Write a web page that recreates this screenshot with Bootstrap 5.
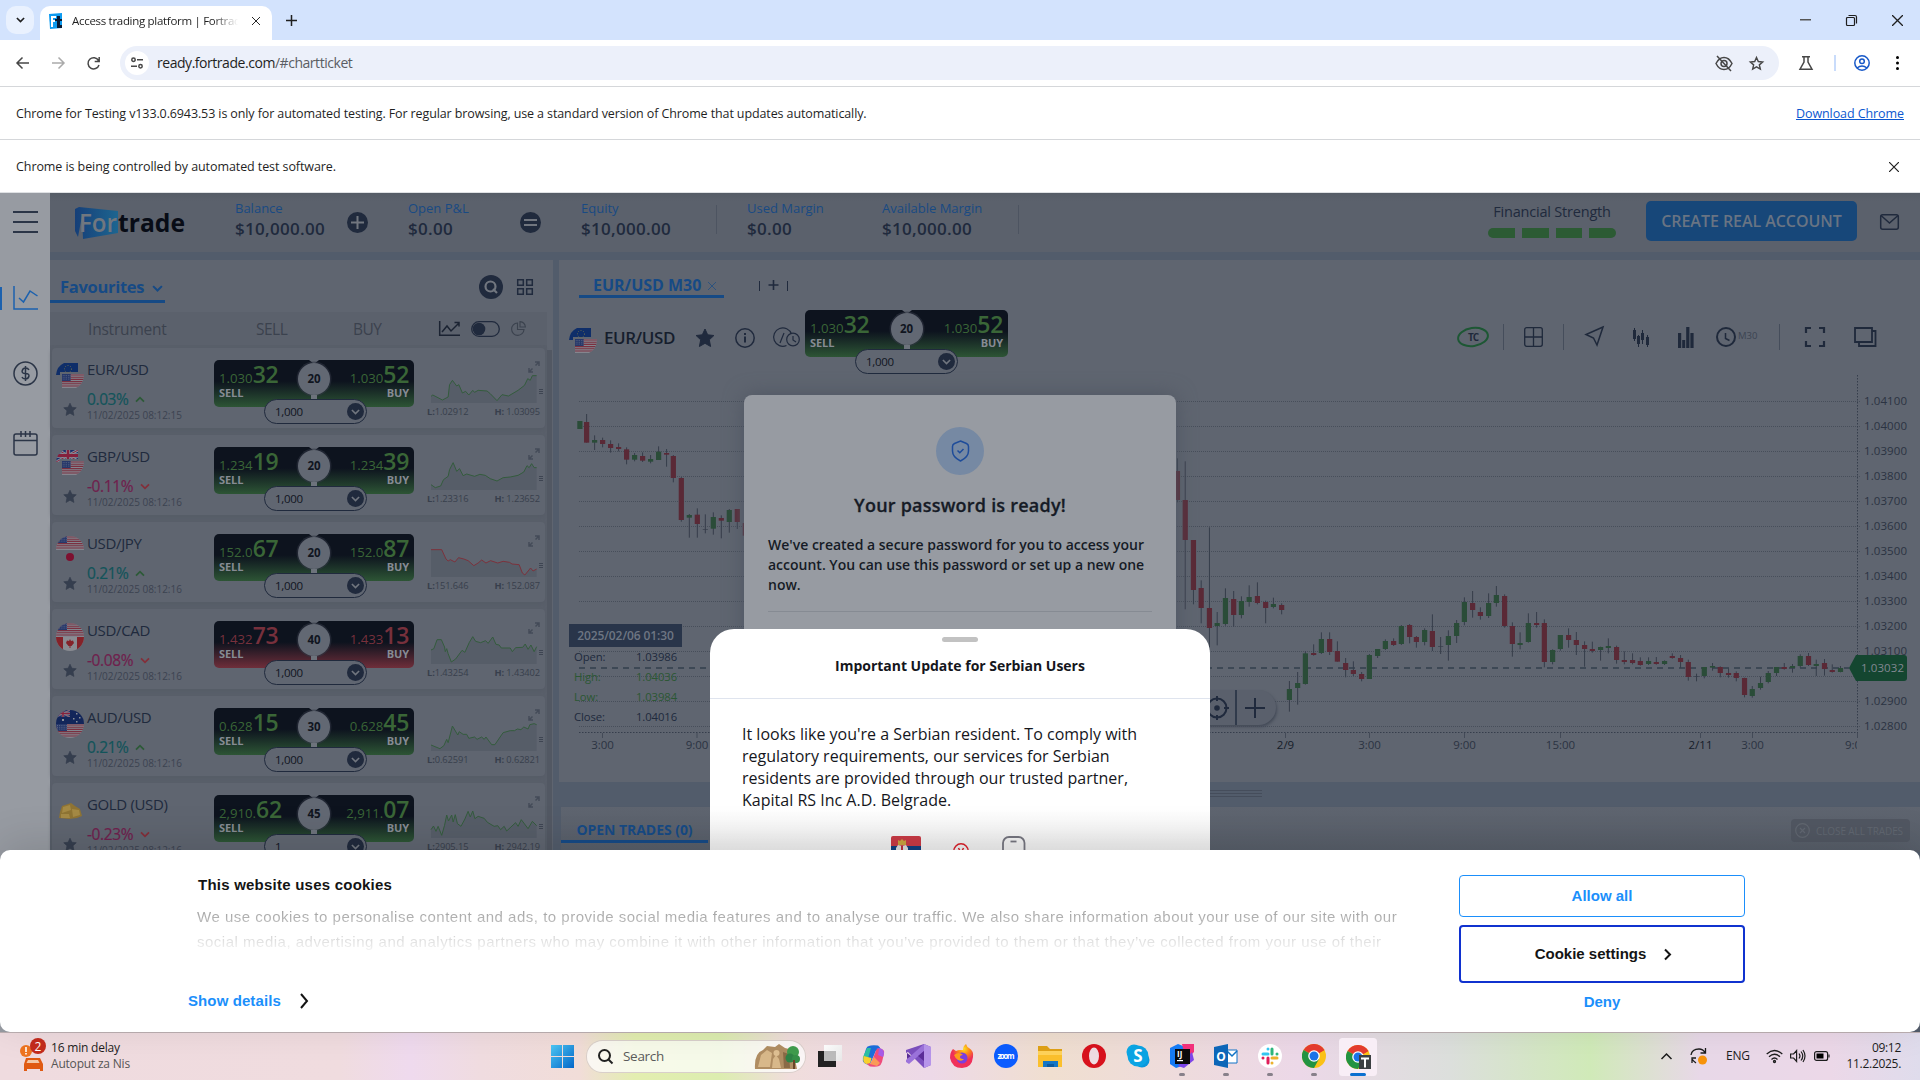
<!DOCTYPE html>
<html lang="en">
<head>
<meta charset="utf-8">
<title>Access trading platform | Fortrade</title>
<link rel="stylesheet" href="https://cdn.jsdelivr.net/npm/bootstrap@5.3.0/dist/css/bootstrap.min.css">
<style>
:root{--navy:#202a3d;--blue:#194a83;--panel:#5f6570;--gap:#525c6b}
body{width:1920px;height:1080px;overflow:hidden;font-family:"Open Sans","Noto Sans",sans-serif;font-size:13px;line-height:20px;color:var(--navy);background:#fff}
svg{display:block;flex:none;overflow:visible}
.ln{fill:none;stroke:currentColor;stroke-width:1.5}
.ui{color:#1f1f1f;font-size:12px;letter-spacing:-.1px}
.tabstrip{height:40px;background:#d3e3fd;padding:6px 0 0 6px}
.tab-menu{width:28px;height:28px;border-radius:10px;background:#e9f1fe}
.tab-on{width:232px;height:34px;margin-left:6px;background:#fff;border-radius:10px 10px 0 0;padding:0 12px 5px 9px}
.tab-title{width:166px;margin-left:9px;-webkit-mask-image:linear-gradient(90deg,#000 85%,transparent);overflow:hidden;font-size:11.5px;letter-spacing:-.3px}
.toolbar{height:46px;padding:0 16px;color:#474747}
.omni{width:1659px;height:34px;margin-left:20px;border-radius:17px;background:#ecf0fa;padding:0 15px 0 5px}
.site-info{width:24px;height:24px;background:#fff}
.infobar{height:53px;border-top:1px solid #d5d7da;padding:1px 16px 0}
.app{height:839px;background:var(--gap)}
.side{width:50px;background:#979ba2;color:#2b3547}
.active-mark{left:0;top:94px;width:2px;height:23px;background:#1c61ae}
.topbar{height:59px;background:linear-gradient(#555c66,#5b616c 8px)}
.stat .lab{color:var(--blue);font-size:13px;line-height:18px}
.stat .val{font-size:17px;font-weight:600;line-height:22px;letter-spacing:.3px;padding-top:1px}
.vr-thin{width:1px;background:#4d5461}
.disc{border-radius:50%;background:var(--navy);color:#71767f;flex:none}
.fs-seg{width:27px;height:10px;background:#2c5b34}
.btn-real{width:211px;height:40px;border-radius:5px;background:#174779;color:#697483;font-size:16px;font-weight:600;letter-spacing:-.05px}
.watch{width:503px;background:var(--panel)}
.fav{width:115px;height:43px;border-bottom:3px solid #164a85;color:#164a85;font-size:16.5px;font-weight:700;padding:11px 2px 0 10px;letter-spacing:-.3px}
.whead{height:33px;width:497px;background:#5b616c;color:#3b424e;font-size:15.5px;letter-spacing:-.2px}
.scroller{right:1px;top:90px;width:5px;height:500px;background:#525863}
.irow{height:87px;width:497px;padding:3px 2px 4px;background:#595f6a}
.irow>div{height:80px;background:#5f6570;border-radius:4px;box-shadow:0 2px 4px #565c67}
.iname{font-size:15px;line-height:20px;letter-spacing:-.35px}
.ipct{font-size:15.5px;line-height:20px;letter-spacing:-.4px;-webkit-text-stroke:.2px}
.idate{font-size:10px;line-height:12px;color:#3c4350;white-space:nowrap}
.up{color:#12545a}.down{color:#701f4d}
.ticket{height:47px;border-radius:5px;background:linear-gradient(#0d131e 0 45%,#2d5535);color:#3a6637;padding:1px 5px}
.ticket.sellred{background:linear-gradient(#0d131e 0 45%,#6f2e3a);color:#77303c}
.quote{line-height:26px;height:25px;font-size:13.2px;white-space:nowrap}
.quote b{font-size:23px;font-weight:600;letter-spacing:-.3px}
.side-lab{font-size:11px;font-weight:700;color:#868b93;line-height:14px;letter-spacing:-.1px}
.pip{width:32px;height:32px;left:50%;margin-left:-16px;top:3px;background:#626873;box-shadow:0 0 0 1.5px #30374488;color:#10151f;font-weight:700;font-size:11.5px}
.notch{left:50%;margin-left:-5px;top:0;border:5px solid transparent;border-top:4px solid #5f6570;border-bottom:0}
.stem{width:6px;height:6px;left:50%;margin-left:-3px;top:35px;background:#6d737c}
.amount{width:103px;height:25px;left:50px;top:39px;border:1.5px solid var(--navy);border-radius:13px;background:#606671;padding:0 2px 0 10px;font-size:11.5px;color:#10151f;letter-spacing:-.3px}
.lohi{font-size:9.3px;line-height:12px;color:#383f4c;letter-spacing:-.1px}
.chartpane{height:522px;width:1361px;background:var(--panel)}
.ctab{width:145px;height:38px;margin-left:20px;border-bottom:3px solid #164a85;color:#164a85;font-size:16px;font-weight:700;letter-spacing:-.02px;padding:13px 5px 0 14px}
.ctext{font-size:11.5px;fill:#2b3342}
.stamp{left:10px;top:364px;width:113px;height:23px;background:#29354a;color:#6e7683;font-size:12px;font-weight:600;letter-spacing:-.1px}
.ohlc{left:15px;top:387px;width:103px;font-size:11.3px;line-height:20px;letter-spacing:-.1px}
.ohlc .g{color:#2b5733}
.drawbar{right:644px;top:430px;width:170px;height:35px;border-radius:18px;background:#5a606c;box-shadow:1px 2px 3px #444b58}
.trades{margin-left:2px;width:1359px;height:45px;background:linear-gradient(#5f6570,#575e69)}
.otab{width:147px;height:36px;border-bottom:3px solid #164a85;color:#164a85;font-weight:700;font-size:14px;letter-spacing:-.05px;padding:12px 0 0}
.close-all{width:119px;height:23px;border-radius:4px;background:#515762;color:#616771;font-size:10px;margin-right:10px;letter-spacing:-.1px}
.pwd{left:744px;top:202px;width:432px;height:300px;border-radius:8px;background:#979ba2;color:#161b26;padding:32px 24px;box-shadow:0 0 20px #4f5662}
.pwd-ico{width:48px;height:48px;background:#7689a3;color:#1e4c9a}
.pwd h2{font-size:18px;font-weight:600;line-height:24px;margin:18px 0 18px;-webkit-text-stroke:.3px;letter-spacing:.22px}
.pwd p{font-size:14px;font-weight:600;line-height:20px;margin:0;letter-spacing:0}
.serb{left:710px;top:436px;width:500px;height:300px;border-radius:24px 24px 0 0;background:linear-gradient(#fff 180px,#eee 222px);color:#15161c}
.grab{width:36px;height:5px;border-radius:3px;background:#c2c2c2;margin-top:8px}
.serb h3{font-size:14px;font-weight:700;line-height:20px;margin:14px 0 22px;letter-spacing:-.02px}
.serb p{margin:24px 70px 25px 32px;font-size:16px;line-height:22px;letter-spacing:.01px}
.cookie{left:0;top:657px;width:1920px;height:182px;background:#fff;border-radius:10px;font-family:"Liberation Sans",Arial,sans-serif;font-size:15px;color:#141414;box-shadow:0 -8px 40px rgba(0,0,0,.12)}
.cookie .txt{width:1215px;height:56px;margin:9px 0 0 -1px;line-height:25px;letter-spacing:.505px;color:#141414;white-space:nowrap;-webkit-mask-image:linear-gradient(rgba(0,0,0,.45),rgba(0,0,0,.02) 50px)}
.cbtn{width:286px;border-radius:4px;font-weight:700;font-size:15px;background:#fff}
.task{height:48px;border-top:1px solid #bdb0b2;background:linear-gradient(90deg,#efdbdf 0,#f0dcdf 340px,#efdaee 410px,#f0dce0 480px,#f1ddd8 580px,#e3eeb0 635px,#dcedb0 720px,#f0dddc 790px,#edd9e8 930px,#f0dfd0 1050px,#ecd8e8 1300px,#dcdfdc 1450px,#d0eab8 1590px,#e8d8e8 1700px,#ecd8e8 1830px,#dfdcec 1920px)}
.search{width:218px;height:31px;border-radius:16px;background:rgba(255,255,255,.72);box-shadow:0 0 0 1px #d9cfcb;font-size:14px;color:#5b5b5b;padding:0 5px 0 11px}
.apps{gap:20px}
.appi{width:24px;height:46px}
.appi.run::after{content:"";position:absolute;bottom:3px;left:9px;width:6px;height:3px;border-radius:2px;background:#87808a}
.appi.cur{background:#f8eef6;box-shadow:0 0 0 7px #f8eef6;height:24px;border-radius:1px}
.appi.cur::after{content:"";position:absolute;bottom:-7px;left:4px;width:16px;height:3px;border-radius:2px;background:#0b70d0}
.tray{font-size:12px;line-height:16px;color:#1d1d1d;letter-spacing:-.35px}
</style>
<script src="https://cdn.jsdelivr.net/npm/bootstrap@5.3.0/dist/js/bootstrap.bundle.min.js"></script>
</head>
<body class="d-flex flex-column">
<svg width="0" height="0" class="position-absolute">
 <defs>
  <clipPath id="round"><ellipse cx="14" cy="14" rx="14" ry="14"/></clipPath>
  <linearGradient id="gWin" x2="1" y2="1"><stop stop-color="#4cc8f5"/><stop offset="1" stop-color="#0466c8"/></linearGradient>
  <linearGradient id="gLogo" x2="1"><stop stop-color="#163f78"/><stop offset="1" stop-color="#1d6590"/></linearGradient>
  <radialGradient id="gFox" cx=".6" cy=".2"><stop stop-color="#ffe226"/><stop offset=".5" stop-color="#ff8a16"/><stop offset="1" stop-color="#f0305a"/></radialGradient>
  <symbol id="us" viewBox="0 0 28 14" preserveAspectRatio="none"><path fill="#84858e" d="M0 0h28v14H0z"/><path stroke="#7a3040" stroke-width="1.1" d="M0 1h28M0 3.2h28M0 5.4h28M0 7.6h28M0 9.8h28M0 12h28"/><path fill="#27386a" d="M0 0h11v7H0z"/><path stroke="#7d8798" stroke-width=".6" stroke-dasharray="1 1.2" d="M1 1.5h10M1 3.3h10M1 5.1h10"/></symbol>
  <symbol id="gb" viewBox="0 0 28 14" preserveAspectRatio="none"><path fill="#1c2f6b" d="M0 0h28v14H0z"/><path stroke="#8b8f98" stroke-width="3" d="M0 0l28 14M28 0L0 14"/><path stroke="#85203c" d="M0 0l28 14M28 0L0 14"/><path stroke="#8b8f98" stroke-width="5" d="M14 0v14M0 7h28"/><path stroke="#85203c" stroke-width="3" d="M14 0v14M0 7h28"/></symbol>
  <symbol id="f-eu" viewBox="0 0 28 26"><path fill="#0f2e69" d="M8 1h14v9H4v3H0Q1 4 8 1z"/><circle cx="12" cy="7" r="3.500" fill="none" stroke="#6b6c4e" stroke-dasharray="1 1.6"/><clipPath id="cu"><path d="M6 12h22Q28 22 20 26H6z"/></clipPath><g clip-path="url(#cu)"><use href="#us" x="6" y="12" width="22" height="14"/></g></symbol>
  <symbol id="f-gb" viewBox="0 0 28 26"><clipPath id="cg"><path d="M8 1h14v9H4v3H0Q1 4 8 1z"/></clipPath><g clip-path="url(#cg)"><use href="#gb" width="24" height="13"/></g><clipPath id="cv"><path d="M6 12h22Q28 22 20 26H6z"/></clipPath><g clip-path="url(#cv)"><use href="#us" x="6" y="12" width="22" height="14"/></g></symbol>
  <symbol id="f-jp" viewBox="0 0 28 28"><g clip-path="url(#round)"><use href="#us" width="28" height="14"/></g><circle cx="14" cy="21" r="4" fill="#7d1030"/></symbol>
  <symbol id="f-ca" viewBox="0 0 28 28"><g clip-path="url(#round)"><use href="#us" width="28" height="14"/><path fill="#8a8c92" d="M0 14h28v14H0z"/><path fill="#842229" d="M0 14h7v14H0zM21 14h7v14h-7zM14 16l1 2 2-.5 1 2.500-2.500 3h-1v2h-1v-2h-1l-2.500-3 1-2.500 2 .5z"/></g></symbol>
  <symbol id="f-au" viewBox="0 0 28 28"><g clip-path="url(#round)"><path fill="#13265a" d="M0 0h28v14H0z"/><use href="#gb" width="14" height="7"/><path fill="#8b8f98" d="M6 9h2v2H6zM20 3h1.500v1.500H20zM17 8h1.500v1.500H17zM23 7h1.500v1.500H23zM20 11h1.500v1.500H20z"/><use href="#us" y="14" width="28" height="14"/></g></symbol>
  <symbol id="f-au2" viewBox="0 0 28 28"><path fill="#8f7434" d="M6 9l9-3 4 3 5 3 2 7-5 2-8 1-10-1 1-6z"/><path fill="#a58a45" d="M7 10l7-2 1 5-9 3zM16 12l7 1 1 5-7 2zM5 17l8 0 1 4-9 0z"/></symbol>
  <symbol id="star" viewBox="0 0 20 20"><path fill="currentColor" stroke="currentColor" stroke-linejoin="round" d="M10 1l2.700 5.800 6.200.7-4.600 4.300 1.300 6.700-5.600-3.200-5.600 3.200 1.300-6.700L1.100 7.500l6.200-.7z"/></symbol>
  <symbol id="chev" viewBox="0 0 10 6"><path fill="none" stroke="currentColor" stroke-width="1.800" d="M1 .8l4 4 4-4"/></symbol>
  <symbol id="x" viewBox="0 0 10 10"><path fill="none" stroke="currentColor" stroke-width="1.200" d="M0 0l10 10M10 0L0 10"/></symbol>
  <symbol id="chrome" viewBox="0 0 24 24"><circle cx="12" cy="12" r="12" fill="#fbc116"/><path fill="#e33b2e" d="M12 12L1.600 6A12 12 0 0 1 22.400 6z"/><path fill="#229342" d="M12 12L1.600 6A12 12 0 0 0 12 24l5-9z"/><path fill="#e33b2e" d="M12 6h10.400L12 12z"/><circle cx="12" cy="12" r="5.800" fill="#fff"/><circle cx="12" cy="12" r="4.500" fill="#1a73e8"/></symbol>
 </defs>
</svg>

<!-- browser chrome -->
<div class="tabstrip d-flex align-items-start ui">
 <div class="tab-menu d-flex align-items-center justify-content-center"><svg width="9" height="6"><use href="#chev"/></svg></div>
 <div class="tab-on d-flex align-items-center">
  <svg width="14" height="16"><path fill="#0e9bf0" d="M0 1l13-1v15L1 16z"/><path fill="#fff" d="M2 3h5v2H4v2h2v2H4v5H2z"/><path fill="#071b35" d="M8 3h3v3h2v2h-2v4h2v3H8V8H6V6h2z"/></svg>
  <div class="tab-title text-nowrap">Access trading platform | Fortrade</div>
  <svg width="8" height="8" class="ms-auto" stroke="#333"><use href="#x"/></svg>
 </div>
 <svg width="11" height="11" class="ln" style="margin:9px 0 0 14px"><path d="M5.500 0v11M0 5.500h11"/></svg>
 <div class="ms-auto d-flex align-items-center" style="height:28px;gap:35px;padding-right:17px">
  <svg width="11" height="2"><path fill="#555" d="M0 0h11v1.500H0z"/></svg>
  <svg width="11" height="11" class="ln" style="stroke-width:1.200"><rect x=".5" y="2.500" width="8" height="8" rx="1"/><path d="M2.500 .5H9a1.500 1.500 0 0 1 1.500 1.500v6.500"/></svg>
  <svg width="11" height="11"><use href="#x"/></svg>
 </div>
</div>
<div class="toolbar d-flex align-items-center ui">
 <svg width="13" height="12" class="ln"><path d="M13 6H1M6.500 .5L1 6l5.500 5.500"/></svg>
 <svg width="13" height="12" class="ln" style="margin-left:23px;color:#aaa"><path d="M0 6h12M6.500 .5L12 6l-5.500 5.500"/></svg>
 <svg width="13" height="13" class="ln" style="margin-left:22px"><path d="M11.500 3.500A5.600 5.600 0 1 0 12 8M12.200 0v4.500H7.700"/></svg>
 <div class="omni d-flex align-items-center">
  <div class="site-info rounded-circle d-flex align-items-center justify-content-center"><svg width="12" height="12" class="ln"><circle cx="2.500" cy="2.700" r="1.700"/><path d="M6 2.700h6M0 9.300h6"/><circle cx="9.500" cy="9.300" r="1.700"/></svg></div>
  <div style="font-size:14px;margin-left:8px;letter-spacing:-.46px;color:#1f1f1f">ready.fortrade.com<span style="color:#5a5d63">/#chartticket</span></div>
  <svg width="18" height="15" class="ln ms-auto"><path d="M1 7.500C5-.5 13-.5 17 7.500 13 15.500 5 15.500 1 7.500zM2 0l14 15"/><circle cx="9" cy="7.500" r="3"/></svg>
  <svg width="15" height="15" viewBox="0 0 20 20" class="ln" style="margin-left:16px;stroke-width:1.900"><path d="M10 2l2.400 5.300 5.800.6-4.400 3.900 1.300 5.700-5.100-3-5.100 3 1.300-5.700L1.800 7.900l5.800-.6z"/></svg>
 </div>
 <svg width="14" height="14" class="ln" style="margin-left:20px"><path d="M3 .7h8M5 1v5L1 13.200h12L9 6V1"/></svg>
 <i style="width:2px;height:16px;background:#c9dcfb;margin-left:21px"></i>
 <svg width="16" height="16" class="ln" style="margin-left:18px;color:#1758c8"><circle cx="8" cy="8" r="7.200"/><circle cx="8" cy="6.300" r="2.300"/><path d="M3 13q5-4 10 0"/></svg>
 <svg width="3" height="14" style="margin-left:26px"><circle cx="1.500" cy="1.500" r="1.500"/><circle cx="1.500" cy="7" r="1.500"/><circle cx="1.500" cy="12.500" r="1.500"/></svg>
</div>
<div class="infobar d-flex align-items-center justify-content-between ui"><span style="font-size:12.500px;letter-spacing:-.11px">Chrome for Testing v133.0.6943.53 is only for automated testing. For regular browsing, use a standard version of Chrome that updates automatically.</span><a href="#" style="color:#0b57d0;font-size:12.500px;letter-spacing:-.08px">Download Chrome</a></div>
<div class="infobar d-flex align-items-center justify-content-between ui" style="padding-right:21px"><span style="font-size:12.500px;letter-spacing:-.08px">Chrome is being controlled by automated test software.</span><svg width="10" height="10"><use href="#x"/></svg></div>
<div style="height:1px;background:#dfe1e4"></div>

<!-- trading app -->
<div class="app d-flex position-relative flex-shrink-0">
 <nav class="side d-flex flex-column align-items-center position-relative flex-shrink-0">
  <i class="active-mark position-absolute"></i>
  <svg width="25" height="23" class="ln" style="margin-top:18px;stroke-width:2"><path d="M0 1h25M0 11h25M0 21h25"/></svg>
  <svg width="25" height="24" class="ln" style="margin-top:52px;color:#1c61ae"><path d="M1 0v23h24M6 12l4.500 4L17 5l7.500 5"/></svg>
  <svg width="25" height="25" class="ln" style="margin-top:51px"><circle cx="12.500" cy="12.500" r="11.500"/><path d="M16 9q-1-2-3.500-2T9.200 9.700t3.300 2.800 3.400 2.800-3.400 2.700T9 16M12.500 5v15"/></svg>
  <svg width="25" height="25" class="ln" style="margin-top:45px"><rect x="1" y="3" width="23" height="21" rx="2"/><path d="M1 9.500h23M8 0v6M12.500 0v6M17 0v6"/></svg>
 </nav>
 <div class="d-flex flex-column flex-shrink-0" style="width:1870px">
  <header class="topbar d-flex">
   <svg width="110" height="34" style="margin:14px 0 0 25px"><path fill="url(#gLogo)" d="M0 2L4 0 43 4 43 26 8 32 7 9 3 30 0 24z"/><text x="4" y="25" font-family="Open Sans" font-weight="600" font-size="25" fill="#71777f" textLength="38" lengthAdjust="spacingAndGlyphs">For</text><text x="43" y="25" font-family="Open Sans" font-weight="700" font-size="25" fill="#080c16" textLength="67" lengthAdjust="spacingAndGlyphs">trade</text></svg>
   <div class="stat d-flex" style="width:173px;margin-left:50px;padding-top:6px"><div><div class="lab">Balance</div><div class="val">$10,000.00</div></div><div class="disc d-flex align-items-center justify-content-center" style="width:21px;height:21px;margin:13px 40px 0 auto"><svg width="13" height="13" class="ln" style="stroke-width:2"><path d="M6.500 0v13M0 6.500h13"/></svg></div></div>
   <div class="stat d-flex" style="width:173px;padding-top:6px"><div><div class="lab">Open P&amp;L</div><div class="val">$0.00</div></div><div class="disc d-flex align-items-center justify-content-center" style="width:21px;height:21px;margin:13px 40px 0 auto"><svg width="13" height="9" class="ln" style="stroke-width:2"><path d="M0 2h13M0 7h13"/></svg></div></div>
   <div class="stat" style="width:135px;padding-top:6px"><div class="lab">Equity</div><div class="val">$10,000.00</div></div>
   <i class="vr-thin" style="height:29px;margin:12px 30px 0 0"></i>
   <div class="stat" style="width:135px;padding-top:6px"><div class="lab">Used Margin</div><div class="val">$0.00</div></div>
   <div class="stat" style="width:136px;padding-top:6px"><div class="lab">Available Margin</div><div class="val">$10,000.00</div></div>
   <i class="vr-thin" style="height:29px;margin:12px 0 0"></i>
   <div style="margin-left:469px;width:128px;padding-top:9px"><div class="text-center" style="font-size:14.500px;letter-spacing:-.2px;white-space:nowrap">Financial Strength</div><div class="d-flex mt-1" style="gap:7px;padding-top:2px"><i class="fs-seg" style="border-radius:5px 0 0 5px"></i><i class="fs-seg"></i><i class="fs-seg"></i><i class="fs-seg" style="border-radius:0 5px 5px 0"></i></div></div>
   <div class="btn-real d-flex align-items-center justify-content-center" style="margin:8px 0 0 30px">CREATE REAL ACCOUNT</div>
   <svg width="19" height="16" class="ln" style="margin:21px 0 0 23px"><rect x=".7" y=".7" width="17.600" height="14.600" rx="2"/><path d="M1 1.500l8.500 7.500L18 1.500"/></svg>
  </header>
  <div class="d-flex" style="margin-top:8px">
   <section class="watch position-relative flex-shrink-0">
    <i class="scroller position-absolute"></i>
    <div class="d-flex" style="height:52px">
     <div class="fav d-flex justify-content-between"><span style="line-height:32px">Favourites</span><svg width="11" height="7" style="margin-top:14px"><use href="#chev"/></svg></div>
     <div class="disc d-flex align-items-center justify-content-center" style="width:24px;height:24px;margin:15px 0 0 314px"><svg width="14" height="14" class="ln" style="stroke-width:2.200"><circle cx="6.500" cy="6.500" r="5"/><path d="M9 9l4 4"/></svg></div>
     <svg width="16" height="16" class="ln" style="margin:19px 0 0 14px"><path d="M.7.7h5.600v5.600H.7zM9.700.7h5.600v5.600H9.700zM.7 9.700h5.600v5.600H.7zM9.700 9.700h5.600v5.600H9.700z"/></svg>
    </div>
    <div class="whead d-flex align-items-center">
     <span style="width:168px;padding-left:38px">Instrument</span><span style="width:97px;padding-left:38px;letter-spacing:-.5px">SELL</span><span style="width:74px;padding-left:38px;letter-spacing:-.5px">BUY</span>
     <svg width="21" height="15" class="ln" style="margin-left:50px;color:#1b2332"><path d="M.7 0v14.300H21M3 11l5-6 4 5 8-8M15.500 1.500H20v4"/></svg>
     <svg width="29" height="16" style="margin-left:11px"><rect x=".7" y=".7" width="27.600" height="14.600" rx="7.300" fill="none" stroke="#202a3d" stroke-width="1.300"/><circle cx="8" cy="8" r="6.300" fill="#202a3d"/></svg>
     <svg width="15" height="15" class="ln" style="margin-left:11px;stroke-width:1.100;color:#3b424e"><path d="M6.500 2A6.200 6.200 0 1 0 13 8.500H6.500zM9 .6V6h5.400A6 6 0 0 0 9 .6z"/></svg>
    </div>
    <div id="rows"></div>
   </section>
   <section style="margin-left:6px">
    <div class="chartpane position-relative">
     <div class="d-flex"><div class="ctab d-flex"><span class="text-nowrap" style="line-height:24px">EUR/USD M30</span><svg width="8" height="8" style="margin:9px 0 0 7px;opacity:.7"><use href="#x"/></svg></div>
      <svg width="30" height="11" class="ln" style="margin:20px 0 0 35px;stroke-width:1"><path d="M.5 1v10M28.500 1v10"/><path stroke-width="1.600" d="M14.500 0v10M9.500 5h10"/></svg></div>
     <div class="d-flex" style="height:64px;margin-top:9px">
      <svg width="28" height="26" style="margin:20px 0 0 10px"><use href="#f-eu"/></svg>
      <span style="margin:20px 0 0 7px;font-size:17px;font-weight:600;line-height:22px;width:91px;letter-spacing:-.45px;color:#161e2d">EUR/USD</span>
      <svg width="20" height="20" style="margin-top:21px"><use href="#star"/></svg>
      <svg width="20" height="20" class="ln" style="margin:21px 0 0 20px"><circle cx="10" cy="10" r="9.200"/><path stroke-width="2" d="M10 8.500v6M10 5v2"/></svg>
      <svg width="28" height="20" class="ln" style="margin:21px 0 0 18px;stroke-width:1.200"><path d="M13.500 17.500A9.200 9.200 0 1 1 18.500 6M11 5l-4 10"/><circle cx="20" cy="11.500" r="6.300"/><path d="M20 8v4l3 2"/></svg>
      <div id="bigticket" style="width:203px;margin:3px 0 0 4px"></div>
      <div class="d-flex align-items-center" style="height:48px;margin:6px 0 0 449px;color:#1f293b">
       <svg width="32" height="20"><ellipse cx="16" cy="10" rx="15" ry="9" fill="none" stroke="#1d5734" stroke-width="2" transform="rotate(-8 16 10)"/><text x="11" y="14" font-size="10" font-weight="700" fill="#1f293b" textLength="11">TC</text></svg>
       <i class="vr-thin" style="height:26px;margin:0 20px 0 14px;background:#454d5b"></i>
       <svg width="19" height="20" class="ln" style="stroke-width:1.300"><rect x=".7" y=".7" width="17.600" height="18.600" rx="2"/><path d="M9.500 1v18M1 10h17"/></svg>
       <i class="vr-thin" style="height:26px;margin:0 21px 0 20px;background:#454d5b"></i>
       <svg width="19" height="20" class="ln" style="margin-top:-2px"><path d="M18 1L1 8.500l7.500 3.500L12 19z"/></svg>
       <svg width="16" height="20" style="margin-left:29px" fill="currentColor" stroke="currentColor"><path d="M1.500 1v13M5.500 8v12M9.500 3v14M14.500 8v12"/><path d="M0 3h3v9H0zM4 9h3v8H4zM8 6h3v7H8zM13 10h3v8h-3z" stroke="none"/></svg>
       <svg width="16" height="21" style="margin-left:29px" fill="currentColor"><path d="M0 6h3.200v15H0zM4.200 13h3v8h-3zM8.200 0h3.200v21H8.200zM12.400 6h3.200v15h-3.200z"/></svg>
       <svg width="20" height="20" class="ln" style="margin-left:22px;stroke-width:2"><circle cx="10" cy="10" r="9"/><path stroke-width="1.500" d="M9.500 6v5.500l4 2"/></svg>
       <span style="font-size:9.500px;margin:-3px 0 0 2px;width:21px;color:#3c4452">M30</span>
       <i class="vr-thin" style="height:26px;margin:0 25px 0 20px;background:#454d5b"></i>
       <svg width="20" height="20" class="ln" style="stroke-width:2.200"><path d="M1 6V1h5M14 1h5v5M19 14v5h-5M6 19H1v-5"/></svg>
       <svg width="23" height="20" class="ln" style="margin-left:29px;stroke-width:1.800"><path d="M1 1h17v14H1zM18 4h3.500v15H5v-4"/></svg>
      </div>
     </div>
     <svg id="plot" class="position-absolute" style="left:0;top:110px" width="1361" height="400"></svg>
     <div class="stamp position-absolute d-flex align-items-center justify-content-center">2025/02/06 01:30</div>
     <div class="ohlc position-absolute">
      <div class="d-flex justify-content-between"><span>Open:</span><span>1.03986</span></div>
      <div class="d-flex justify-content-between g"><span>High:</span><span>1.04036</span></div>
      <div class="d-flex justify-content-between g"><span>Low:</span><span>1.03984</span></div>
      <div class="d-flex justify-content-between"><span>Close:</span><span>1.04016</span></div>
     </div>
     <div class="drawbar position-absolute d-flex align-items-center justify-content-end">
      <svg width="24" height="24" class="ln" style="stroke-width:2"><circle cx="12" cy="12" r="9.500"/><circle cx="12" cy="12" r="1.800" fill="currentColor"/><path d="M12 0v5M12 19v5M0 12h5M19 12h5"/></svg>
      <i style="width:2px;height:35px;background:#303a4b;margin:0 8px 0 6px"></i>
      <svg width="20" height="20" class="ln" style="margin-right:11px;stroke-width:2"><path d="M10 0v20M0 10h20"/></svg>
     </div>
    </div>
    <div style="height:25px;padding:8px 0 0 644px"><svg width="60" height="8" class="ln" style="stroke:#454d5b;stroke-width:1"><path d="M0 .5h59M0 3.500h59M0 6.500h59"/></svg></div>
    <div class="trades d-flex align-items-start justify-content-between">
     <div class="otab d-flex align-items-center justify-content-center text-nowrap">OPEN TRADES (0)</div>
     <div class="close-all d-flex align-items-center text-nowrap" style="margin-top:12px;padding-left:4px"><svg width="15" height="15" class="ln" style="margin-right:6px;stroke-width:1.200"><circle cx="7.500" cy="7.500" r="6.800"/><path d="M5 5l5 5M10 5l-5 5"/></svg>CLOSE ALL TRADES</div>
    </div>
   </section>
  </div>
 </div>

 <div class="pwd position-absolute">
  <div class="pwd-ico rounded-circle mx-auto d-flex align-items-center justify-content-center"><svg width="19" height="22" class="ln"><path d="M9.500 1l6 2.500q2 1 2 3V11q0 6-8 10-8-4-8-10V6.500q0-2 2-3zM6.500 10.500l2.300 2.300L12.500 9"/></svg></div>
  <h2 class="text-center">Your password is ready!</h2>
  <p>We've created a secure password for you to access your account. You can use this password or set up a new one now.</p>
  <div style="height:1px;background:#868b93;margin-top:16px"></div>
 </div>
 <div class="serb position-absolute">
  <div class="grab mx-auto"></div>
  <h3 class="text-center">Important Update for Serbian Users</h3>
  <div style="height:1px;background:#dfe4ee"></div>
  <p>It looks like you're a Serbian resident. To comply with regulatory requirements, our services for Serbian residents are provided through our trusted partner, Kapital RS Inc A.D. Belgrade.</p>
  <div class="d-flex" style="padding-left:181px">
   <svg width="30" height="24"><rect width="30" height="12" rx="2" fill="#c83a45"/><path fill="#123f7e" d="M0 10h30v14H0z"/><path fill="#ddd" d="M5 12l2-3 4 1 4-1 2 3v8H5z"/><path fill="#c9a23f" d="M7 4l2 1 2-2 2 2 2-1v5H7z"/><path fill="#b8303c" d="M10 10h2v8h-2z"/></svg>
   <svg width="16" height="20" class="ln" style="margin:7px 0 0 32px;color:#d9202a"><circle cx="8" cy="8" r="7.200"/><path d="M5.500 5l1.500 3M10.500 5L9 8"/></svg>
   <svg width="24" height="30" class="ln" style="margin:-1px 0 0 33px;color:#75757f;stroke-width:1.800"><rect x="1" y="2" width="21.500" height="34" rx="6"/><path d="M8.500 6.500h6"/></svg>
  </div>
 </div>

 <div class="cookie position-absolute d-flex">
  <div style="margin-left:198px;width:1261px;padding-top:25px">
   <div style="font-weight:700;letter-spacing:.23px">This website uses cookies</div>
   <div class="txt">We use cookies to personalise content and ads, to provide social media features and to analyse our traffic. We also share information about your use of our site with our<br>social media, advertising and analytics partners who may combine it with other information that you’ve provided to them or that they’ve collected from your use of their</div>
   <div class="d-flex align-items-center" style="margin:31px 0 0 -10px;color:#1b8ffb;font-weight:700;letter-spacing:.1px"><span>Show details</span><svg width="8" height="14" class="ln" style="margin-left:19px;color:#141414;stroke-width:2"><path d="M1 0l6 7-6 7"/></svg></div>
  </div>
  <div class="d-flex flex-column" style="padding-top:25px">
   <div class="cbtn d-flex align-items-center justify-content-center" style="height:42px;border:1px solid #1b8ffb;color:#1b8ffb">Allow all</div>
   <div class="cbtn d-flex align-items-center justify-content-center" style="height:58px;border:2px solid #1032cf;margin-top:8px"><span>Cookie settings</span><svg width="7" height="11" class="ln" style="margin:0 -2px 0 18px;stroke-width:2"><path d="M1 .5l5 5-5 5"/></svg></div>
   <div class="text-center" style="color:#1b8ffb;font-weight:700;margin-top:9px">Deny</div>
  </div>
 </div>
</div>

<!-- taskbar -->
<footer class="task d-flex flex-shrink-0">
 <svg width="28" height="34" style="margin:5px 0 0 19px"><circle cx="7" cy="13" r="6" fill="#ee7420"/><path fill="#fff" d="M6.200 9h1.600v5H6.200zM6.200 15h1.600v1.500H6.200z"/><path fill="#e05a12" d="M7 20h14l3 6v7h-3v-2H8v2H5v-7z"/><path fill="#f3c9a8" d="M9 22h10l1.500 3h-13z"/><circle cx="19" cy="8" r="8" fill="#c42b1c"/><text x="19" y="12.500" font-size="12" fill="#fff" text-anchor="middle">2</text></svg>
 <div class="tray" style="margin:7px 0 0 4px;width:500px;letter-spacing:-.2px">16 min delay<br><span style="color:#555">Autoput za Nis</span></div>
 <div class="d-flex align-items-center" style="height:46px">
  <svg width="23" height="23" fill="url(#gWin)"><path d="M0 0h11v11H0zM12 0h11v11H12zM0 12h11v11H0zM12 12h11v11H12z"/></svg>
  <div class="search d-flex align-items-center" style="margin-left:13px"><svg width="15" height="15" class="ln" style="color:#222;stroke-width:2"><circle cx="6.500" cy="6.500" r="5.500"/><path d="M10.500 10.500l4 4"/></svg><span style="margin-left:10px;font-size:13.500px;letter-spacing:-.3px">Search</span>
   <svg width="45" height="25" class="ms-auto"><path fill="#b08d62" d="M0 25q-1-16 8-19l4-4 8 1 4-3 6 4 8 2 4 19z"/><path fill="#d8b88a" d="M3 23l3-12 6-5 5 3-2 14zM17 24l1-9 3-4 3 4 2 9z"/><circle cx="21.500" cy="9" r="3" fill="#dfc093"/><path fill="#8a6a46" d="M28 8l6 2 1 14h-6z"/><circle cx="38" cy="8" r="6" fill="#3f9c4d"/><circle cx="35" cy="14" r="4.500" fill="#2f8246"/><circle cx="41" cy="15" r="4" fill="#358f48"/><path fill="#6b452a" d="M38 16h2v9h-2z"/></svg></div>
 </div>
 <div class="apps d-flex" style="margin-left:13px">
  <div class="appi d-flex align-items-center"><svg width="24" height="22"><defs><linearGradient id="gT" x2="1" y2="1"><stop stop-color="#fff"/><stop offset="1" stop-color="#e8e8e8"/></linearGradient></defs><path fill="#222" d="M0 6h18v16H0z"/><path fill="url(#gT)" d="M6 0h18v16H6z"/><path fill="#bbb" d="M6 6h12v10H6z"/></svg></div>
  <div class="appi d-flex align-items-center"><svg width="24" height="22"><path fill="#1c6fdc" d="M7 1q2-1 9-.5 2 1 3 5h-5L9 17q-1 4-5 2-4-2-3-5L4 4q1-3 3-3z"/><path fill="#2cc0a4" d="M5 3l4 0-4 14q-5 0-4-5z"/><path fill="#f7d02e" d="M1.500 12q-1 6 3 7 3 1 4-2l1-4-8-2z"/><path fill="#ef4c7c" d="M17 21q-2 1-9 .5-2-1-3-3h4l5-13q1-3 4-2 5 1 4 5L20 17q-1 3-3 4z"/><path fill="#a85ce8" d="M14 4q5-2 7 1t0 7l-5-2 1-6z"/><path fill="#fa9b57" d="M8 19l4-7 6 6-3 3z"/></svg></div>
  <div class="appi d-flex align-items-center"><svg width="25" height="24"><path fill="#7c4fbf" d="M18 0l7 3v18l-7 3L2 8l-2 1V6l3-1z"/><path fill="#9c73db" d="M18 0v7L3 20l-3-2v-2z"/><path fill="#5b2d99" d="M18 17l-6-5 6-5zM1 9l4 3-4 3z"/><path fill="#b795ea" d="M18 0l7 3v18l-7 3z"/></svg></div>
  <div class="appi d-flex align-items-center"><svg width="24" height="24"><path fill="url(#gFox)" d="M3 5l3 2q2-1 4-1l3 0q0-4 3-6 1 3 3 4 5 3 4 9-1 11-11 11T0 14Q0 8 3 5z"/><circle cx="12" cy="14" r="5.500" fill="#7a3fe0"/><path fill="#ff9b1c" d="M4 11q5-4 9 0-3 0-3 2t4 2q-2 3-6 1-3-2-4-5z"/></svg></div>
  <div class="appi d-flex align-items-center"><svg width="24" height="24"><circle cx="12" cy="12" r="12" fill="#0b5cff"/><text x="12" y="14.500" text-anchor="middle" font-size="8" font-weight="700" fill="#fff" textLength="17">zoom</text></svg></div>
  <div class="appi d-flex align-items-center"><svg width="25" height="22"><path fill="#e0a115" d="M0 1h9l3 3h12v8H0z"/><path fill="#ffd35a" d="M0 6h24v16H0z"/><path fill="#fbc02d" d="M0 10h24v12H0z"/><path fill="#1476c6" d="M5 16h15v6H5z"/><path fill="#0d5a9e" d="M9 19h7v3H9z"/></svg></div>
  <div class="appi d-flex align-items-center"><svg width="24" height="24"><circle cx="12" cy="12" r="12" fill="#d8121d"/><ellipse cx="12" cy="12" rx="5" ry="8.500" fill="#efdde2"/></svg></div>
  <div class="appi d-flex align-items-center"><svg width="24" height="24"><circle cx="8" cy="8" r="7.500" fill="#0aa8e6"/><circle cx="16" cy="16" r="7.500" fill="#0a98dc"/><circle cx="12" cy="12" r="10.500" fill="#0ba4e4"/><text x="12" y="18" text-anchor="middle" font-size="17" font-weight="700" fill="#fff">S</text></svg></div>
  <div class="appi run position-relative d-flex align-items-center"><svg width="24" height="24"><path fill="#157bf5" d="M0 4l8-4 10 4v16l-12 4-6-4z"/><path fill="#f2307a" d="M12 0h12v8l-8 8z"/><path fill="#7d45e8" d="M22 8l2 8-10 8-6-2z"/><path fill="#0a0a0a" d="M5 5h15v15H5z"/><text x="7" y="13" font-size="8" font-weight="700" fill="#fff">IJ</text><path fill="#fff" d="M7 16h6v1.200H7z"/></svg></div>
  <div class="appi run position-relative d-flex align-items-center"><svg width="24" height="24"><path fill="#fff" stroke="#1073c6" d="M12 6h11v13H12z"/><path fill="none" stroke="#1073c6" stroke-width="1.500" d="M13 7l5 5 5-5"/><path fill="#0c66b8" d="M0 3l14-3v24L0 21z"/><text x="7" y="16.500" text-anchor="middle" font-size="12" font-weight="700" fill="#fff">O</text></svg></div>
  <div class="appi run position-relative d-flex align-items-center"><svg width="24" height="24"><circle cx="12" cy="12" r="12" fill="#fff"/><g stroke-width="3" stroke-linecap="round"><path stroke="#36c5f0" d="M5 10h5M10 5v.1"/><path stroke="#2eb67d" d="M14 5v5M19 10v.1"/><path stroke="#ecb22e" d="M14 14h5M14 19v.1"/><path stroke="#e01e5a" d="M10 14v5M5 14v.1"/></g></svg></div>
  <div class="appi run position-relative d-flex align-items-center"><svg width="24" height="24"><use href="#chrome"/></svg></div>
  <div class="appi cur position-relative align-self-center d-flex align-items-center"><svg width="24" height="24"><use href="#chrome"/><path fill="#3c4043" d="M13 10h12v14H13z"/><path fill="#fff" d="M15 12.500h8v2h-3v8h-2v-8h-3z"/></svg></div>
 </div>
 <div class="tray d-flex align-items-center ms-auto" style="padding-right:19px;height:46px">
  <svg width="11" height="7" class="ln"><path d="M.5 6l5-5 5 5"/></svg>
  <svg width="18" height="18" class="ln" style="margin-left:18px;stroke-width:1.300"><path d="M1 8q1-6 8-6 4 0 6 3.500M15.500 1v5h-5M2 16v-5h4M2 12q1 2 4 4"/><circle cx="12.500" cy="13" r="4.500" fill="#f7930a" stroke="none"/></svg>
  <span style="margin-left:18px;width:31px;letter-spacing:-.2px">ENG</span>
  <svg width="17" height="14" class="ln" style="margin-left:9px;stroke-width:1.300"><path d="M.7 5q7.800-7 15.600 0M3 7.800q5.500-5 11 0M5.500 10.400q3-2.800 6 0"/><circle cx="8.500" cy="12.500" r="1"/></svg>
  <svg width="15" height="14" class="ln" style="margin-left:7px;stroke-width:1.200"><path d="M.6 5h3l3-3.500v11L3.600 9h-3zM9 4.500q2 2.500 0 5M11 2.500q3.500 4.500 0 9M13 1q4 6 0 12"/></svg>
  <svg width="16" height="10" style="margin-left:9px"><rect x=".6" y=".6" width="13" height="8.800" rx="2" fill="none" stroke="#1d1d1d" stroke-width="1.200"/><path d="M2.500 2.500h7v5h-7zM14.500 3.500h1v3h-1z"/></svg>
  <div class="text-end" style="margin-left:15px;width:56px;letter-spacing:-.3px">09:12<br>11.2.2025.</div>
 </div>
</footer>

<script>
function ticket(q, cls){
 return `<div class="position-relative"><div class="ticket ${cls} d-flex justify-content-between">
 <div><div class="quote">${q[0]}<b>${q[1]}</b></div><div class="side-lab">SELL</div></div>
 <div class="text-end"><div class="quote">${q[2]}<b>${q[3]}</b></div><div class="side-lab">BUY</div></div></div>
 <i class="notch position-absolute"></i><div class="pip position-absolute rounded-circle d-flex align-items-center justify-content-center">${q[4]}</div><i class="stem position-absolute"></i>
 <div class="amount position-absolute d-flex align-items-center justify-content-between"><span>${q[5]}</span><span class="disc d-flex align-items-center justify-content-center" style="width:17px;height:17px"><svg width="9" height="6"><use href="#chev"/></svg></span></div></div>`;
}
// name, flag, change, time, quote, low, high, sparkline baseline, sparkline points
const rows=[
['EUR/USD','f-eu','0.03%','15',['1.030','32','1.030','52','20','1,000'],'1.02912','1.03095',638,'1208,618 1213,614 1240,629 1256,620 1260,583 1268,570 1280,587 1286,583 1296,608 1305,603 1314,614 1325,600 1330,606 1340,600 1365,602 1374,610 1393,631 1407,613 1425,617 1452,600 1470,585 1479,565 1486,570 1492,556 1504,556'],
['GBP/USD','f-gb','-0.11%','16',['1.234','19','1.234','39','20','1,000'],'1.23316','1.23652',899,'1208,883 1220,892 1235,887 1243,868 1256,858 1260,838 1270,817 1280,843 1288,835 1298,856 1308,851 1330,858 1345,852 1360,855 1374,865 1393,872 1410,862 1430,860 1452,855 1468,845 1477,826 1483,832 1490,820 1497,832 1504,832'],
['USD/JPY','f-jp','0.21%','16',['152.0','67','152.0','87','20','1,000'],'151.646','152.087',200,'1208,118 1238,118 1250,146 1256,152 1262,148 1275,155 1285,142 1300,146 1312,151 1328,166 1340,158 1350,149 1362,158 1375,151 1395,158 1410,153 1428,156 1435,161 1455,163 1464,188 1471,194 1487,173 1494,182 1504,176'],
['USD/CAD','f-ca','-0.08%','16',['1.432','73','1.433','13','40','1,000'],'1.43254','1.43402',461,'1208,419 1216,415 1225,388 1237,388 1246,410 1248,424 1252,415 1256,430 1265,455 1277,446 1295,420 1303,426 1315,397 1325,379 1333,393 1347,397 1361,391 1368,399 1381,380 1390,402 1399,404 1405,413 1430,413 1436,424 1445,412 1465,411 1472,401 1480,417 1488,404 1497,424 1504,409'],
['AUD/USD','f-au','0.21%','16',['0.628','15','0.628','45','30','1,000'],'0.62591','0.62821',722,'1208,704 1233,715 1244,706 1252,687 1256,697 1268,647 1283,674 1287,664 1298,672 1308,672 1314,684 1330,680 1337,687 1350,680 1357,687 1362,680 1378,703 1387,703 1410,667 1430,661 1442,661 1450,656 1460,658 1468,650 1480,656 1485,643 1497,640 1504,643'],
['GOLD (USD)','f-au2','-0.23%','16',['2,910.','62','2,911.','07','45','1'],'2905.15','2942.19',983,'1208,958 1215,947 1222,963 1228,948 1238,975 1246,945 1252,914 1257,932 1266,914 1270,935 1276,913 1282,940 1292,948 1303,926 1312,903 1318,920 1325,902 1331,925 1340,918 1357,924 1366,936 1385,948 1395,946 1403,958 1413,948 1420,962 1445,937 1452,948 1461,928 1480,955 1492,933 1504,946']];
document.getElementById('rows').innerHTML=rows.map(r=>{
 const neg=r[2][0]=='-', pair=/f-eu|f-gb/.test(r[1]);
 return `<div class="irow"><div class="d-flex">
 <div style="width:31px;padding:14px 0 0 4px"><svg width="28" height="${pair?26:28}"><use href="#${r[1]}"/></svg><svg width="14" height="15" style="margin:${pair?14:12}px 0 0 7px;color:#353e4e"><use href="#star"/></svg></div>
 <div style="width:127px;padding:11px 0 0 4px"><div class="iname">${r[0]}</div><div class="ipct d-flex align-items-center ${neg?'down':'up'}" style="margin-top:10px">${r[2]}<svg width="10" height="7" style="margin-left:7px;color:${neg?'#832f3a':'#2d5a38'};${neg?'':'transform:scaleY(-1)'}"><use href="#chev"/></svg></div><div class="idate" style="letter-spacing:-.02px">11/02/2025 08:12:${r[3]}</div></div>
 <div style="width:200px;margin:12px 0 0 4px">${ticket(r[4],r[0]=='USD/CAD'?'sellred':'')}</div>
 <div style="margin:13px 0 0 13px;width:113px"><svg width="12" height="12" class="ln ms-auto" style="color:#444b58"><path d="M7.500 4.500L11 1M7 1h4v4M4.500 7.500L1 11M1 7v4h4"/></svg>
  <div class="d-flex" style="margin-left:4px"><svg width="106" height="30" viewBox="1208 ${r[7]-90} 297 90" preserveAspectRatio="none"><path fill="#565d68" d="M${r[8].split(' ').join('L')}L1504,${r[7]}L1208,${r[7]}z"/><polyline fill="none" stroke="${r[0]=='USD/JPY'?'#7c323c':'#345c3d'}" vector-effect="non-scaling-stroke" points="${r[8]}"/></svg><svg width="4" height="6" style="margin:16px 0 0 2px" stroke="#3e4552"><path d="M0 .5h4M0 2.500h4M0 4.500h4"/></svg></div>
  <div class="lohi d-flex justify-content-between" style="margin-top:3px"><span><b>L:</b>${r[5]}</span><span><b>H:</b> ${r[6]}</span></div></div>
 </div></div>`}).join('');
document.getElementById('bigticket').innerHTML=ticket(rows[0][4],'');

// candles: x, high, body top, body bottom, low, direction
const left='71 93 93 117 117 g,87 72 96 158 158 r,106 136 150 158 180 g,125 143 150 162 172 r,144 151 162 174 188 r,163 160 171 177 184 r,182 172 178 209 223 r,201 189 195 209 214 g,220 187 198 212 216 r,239 195 207 215 220 g,258 169 185 210 210 g,277 177 189 194 230 r,293 195 198 264 277 r,312 261 264 390 395 r,331 372 375 383 443 g,350 355 374 402 443 r,369 373 417 419 430 d,388 367 381 416 434 g,407 376 384 392 445 r,426 357 360 396 428 g,445 357 357 396 417 r,464 399 399 437 437 r';
const right='36 205 243 330 337 r,52 214 330 450 658 r,69 450 450 600 643 r,85 571 594 654 700 r,102 412 654 714 780 r,118 666 699 708 766 g,135 595 624 702 707 g,152 603 627 675 710 r,168 619 633 675 685 g,184 586 621 636 650 g,201 577 618 639 643 r,218 632 636 654 700 r,234 623 642 651 655 g,251 640 645 660 673 r,267 873 897 930 965 g,284 846 879 894 944 g,300 784 790 882 884 g,317 763 789 795 797 r,333 727 747 789 792 g,350 727 747 786 795 r,366 754 783 815 815 r,383 804 819 840 862 r,399 814 840 852 858 r,416 846 852 867 874 r,432 792 795 867 867 g,449 777 777 798 804 g,465 748 753 777 780 g,482 745 753 765 768 r,498 705 708 762 765 g,515 702 705 741 760 r,529 738 741 756 773 r,546 715 720 756 766 g,562 673 723 771 783 r,579 741 768 770 792 d,595 721 738 765 812 g,612 690 699 738 759 g,628 622 636 696 706 g,645 603 639 660 683 r,661 652 666 678 689 r,678 610 639 678 684 g,694 588 615 639 650 g,711 613 618 708 713 r,727 697 708 762 800 r,743 727 759 765 778 g,760 670 699 756 758 g,777 666 699 705 713 r,793 688 699 816 832 r,810 778 780 816 823 g,826 735 735 777 782 g,843 715 735 750 773 r,859 726 750 765 795 r,876 754 765 777 830 r,892 755 777 783 788 r,909 770 771 780 812 g,925 745 768 774 790 g,942 767 771 810 821 r,958 784 810 816 823 r,975 790 810 819 823 r,991 802 813 825 827 r,1008 802 813 822 825 g,1024 801 816 822 824 r,1041 811 813 822 825 g,1057 790 798 804 806 r,1074 795 804 816 834 r,1090 809 816 861 872 r,1107 851 858 860 874 d,1123 831 831 858 865 g,1140 819 828 833 842 g,1156 829 831 849 862 r,1173 835 849 855 863 r,1189 844 849 864 874 r,1206 863 864 915 922 r,1222 888 897 918 923 g,1239 860 879 894 899 g,1255 843 849 876 880 g,1272 831 831 849 858 g,1288 819 831 837 839 r,1305 822 828 834 848 g,1321 793 798 828 833 g,1338 789 798 825 828 r,1354 809 822 828 858 g,1371 807 819 837 857 r,1387 823 840 846 848 r,1404 828 834 846 847 g';
const X0=559,Y0=370;let s='';
for(let i=0;i<14;i++){const y=31.5+25*i;s+=`<path stroke="#474e5a" stroke-dasharray="1 1" d="M20 ${y}H1301"/><text class="ctext" x="1305" y="${y+3.500}" textLength="43">${(1.041-i*.001).toFixed(5)}</text>`}
s+=`<path stroke="#363e4c" stroke-dasharray="1.500 1.500" d="M1298.500 5V362M20 362.500H1299"/><path stroke="#3d4855" stroke-width="2" stroke-dasharray="6 5" d="M20 298H1290"/>`;
[[602.5,'3:00'],[697,'9:00'],[1285.5,'2/9'],[1369.5,'3:00'],[1464.5,'9:00'],[1560.5,'15:00'],[1700.5,'2/11'],[1752.5,'3:00']].forEach(([x,t])=>{s+=`<path stroke="#434a57" d="M${x-X0} 363v5"/><text class="ctext" text-anchor="middle" x="${x-X0}" y="379" ${t[1]=='/'?'style="fill:#151c29"':''}>${t}</text>`});
s+='<path stroke="#434a57" d="M1298.500 363v5"/><svg x="1284" y="364" width="14" height="20" style="overflow:hidden"><text class="ctext" x="2" y="15">9:00</text></svg>';
const draw=(str,ox,k)=>str.split(',').forEach(c=>{let[x,h,a,b,l,d]=c.split(' ');x=ox+x/k-X0;const y=v=>v/3+390-Y0;
 s+=`<path stroke="#363d4a" d="M${x} ${y(h)}V${y(l)}"/><path fill="${d=='r'?'#5a2936':d=='g'?'#2a4c38':'#363d4a'}" d="M${x-2.600} ${y(a)}h5.200V${y(b)}h-5.200z"/>`});
draw(left,550,2.3758);draw(right,1160,2.0632);
s+='<path fill="#144630" d="M1290 298l7-13h48q3 0 3 3v20q0 3-3 3h-48z"/><text x="1302" y="302" font-size="11.500" fill="#828892" textLength="43">1.03032</text>';
document.getElementById('plot').innerHTML=s;
</script>
</body>
</html>
